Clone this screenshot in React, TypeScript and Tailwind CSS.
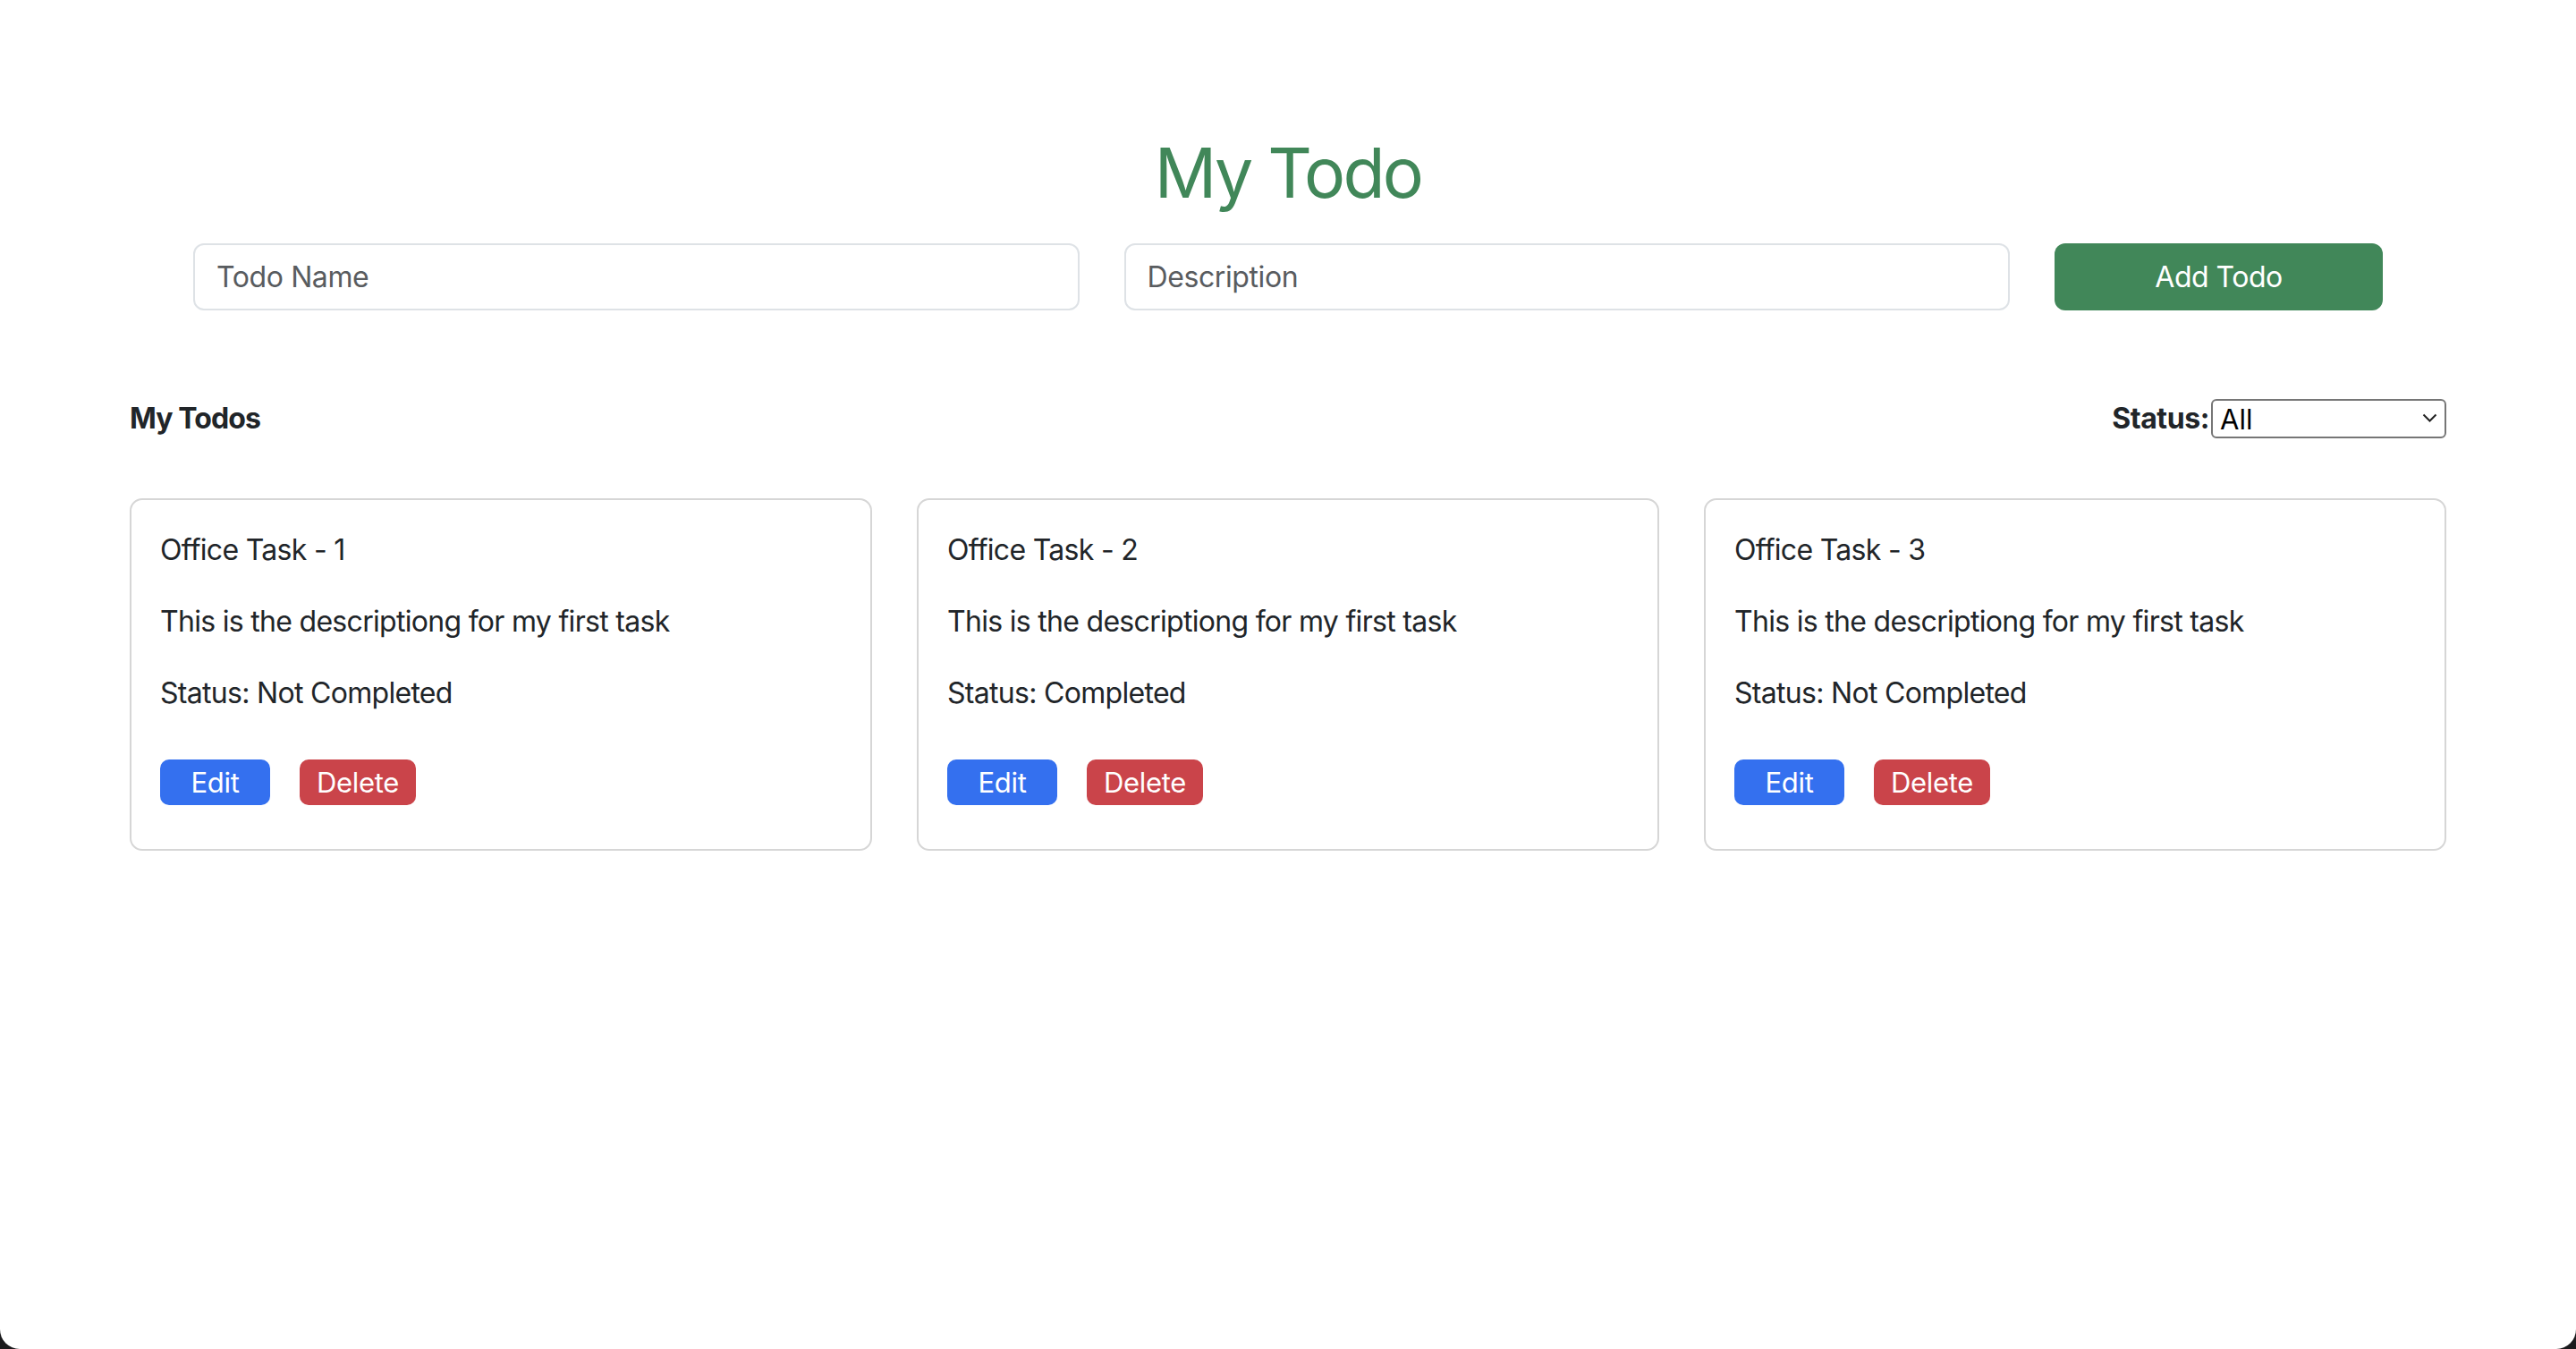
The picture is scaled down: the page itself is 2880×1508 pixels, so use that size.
import { useState } from "react";

type Todo = {
  id: number;
  name: string;
  description: string;
  completed: boolean;
};

const initialTodos: Todo[] = [
  { id: 1, name: "Office Task - 1", description: "This is the descriptiong for my first task", completed: false },
  { id: 2, name: "Office Task - 2", description: "This is the descriptiong for my first task", completed: true },
  { id: 3, name: "Office Task - 3", description: "This is the descriptiong for my first task", completed: false },
];

const TodoCard = ({ todo }: { todo: Todo }) => {
  return (
    <div className="rounded-[14px] border-2 border-solid border-[#d6d6d6] bg-white px-8 pt-8 pb-[49px] text-[32px] leading-[48px] tracking-[-0.7px] text-[#212529]">
      <p className="mb-8">{todo.name}</p>
      <p className="mb-8">{todo.description}</p>
      <p>Status: {todo.completed ? "Completed" : "Not Completed"}</p>
      <section className="mt-[50px] flex gap-[33px]">
        <button className="h-[51px] w-[123px] rounded-[10px] bg-[#3470ef] text-[31px] leading-none tracking-[-0.3px] text-white">
          Edit
        </button>
        <button className="h-[51px] w-[130px] rounded-[10px] bg-[#ca444a] text-[31px] leading-none tracking-[-0.3px] text-white">
          Delete
        </button>
      </section>
    </div>
  );
};

const App = () => {
  const [todos] = useState<Todo[]>(initialTodos);
  const [filter, setFilter] = useState("all");

  return (
    <div className="h-[1508px] w-full bg-[#1b1b1d] font-['Inter',sans-serif]">
      <div className="h-full w-full overflow-hidden rounded-b-[22px] bg-white">
        <div className="mx-auto w-[2590px] pt-[147px]">
          <h1 className="text-center text-[77px] leading-[1.2] font-normal tracking-[-2.8px] text-[#418759]">My Todo</h1>

          <div className="mt-[33px] flex gap-[50px] px-[71px]">
            <input
              className="h-[75px] flex-1 rounded-[12px] border-2 border-[#dee2e6] px-[24px] text-[32px] tracking-[-0.4px] text-[#212529] outline-none placeholder:text-[#595c5f]"
              placeholder="Todo Name"
            />
            <input
              className="h-[75px] flex-1 rounded-[12px] border-2 border-[#dee2e6] px-[24px] text-[32px] tracking-[-0.4px] text-[#212529] outline-none placeholder:text-[#595c5f]"
              placeholder="Description"
            />
            <button className="h-[75px] w-[367px] rounded-[12px] bg-[#418759] text-[32px] tracking-[-0.5px] text-white">
              Add Todo
            </button>
          </div>

          <div className="mt-[99px] flex h-[44px] items-center justify-between">
            <h5 className="text-[32px] font-bold tracking-[-0.9px] text-[#212529]">My Todos</h5>
            <div className="flex items-center">
              <span className="mr-[2px] text-[32px] font-bold tracking-[-0.4px] text-[#212529]">Status:</span>
              <div className="relative">
                <select
                  value={filter}
                  onChange={(e) => setFilter(e.target.value)}
                  className="h-[44px] w-[263px] appearance-none rounded-[6px] border-2 border-[#767676] bg-white pl-[8px] text-[31px] leading-none text-black outline-none"
                >
                  <option value="all">All</option>
                  <option value="completed">Completed</option>
                  <option value="not">Not Completed</option>
                </select>
                <svg
                  className="pointer-events-none absolute top-[16px] right-[10px]"
                  width="17"
                  height="11"
                  viewBox="0 0 17 11"
                  fill="none"
                >
                  <path d="M1.5 1.5 8.5 8.5 15.5 1.5" stroke="#222" strokeWidth="2" />
                </svg>
              </div>
            </div>
          </div>

          <div className="mt-[67px] grid grid-cols-3 gap-[50px]">
            {todos.map((todo) => (
              <TodoCard key={todo.id} todo={todo} />
            ))}
          </div>
        </div>
      </div>
    </div>
  );
};

export default App;
